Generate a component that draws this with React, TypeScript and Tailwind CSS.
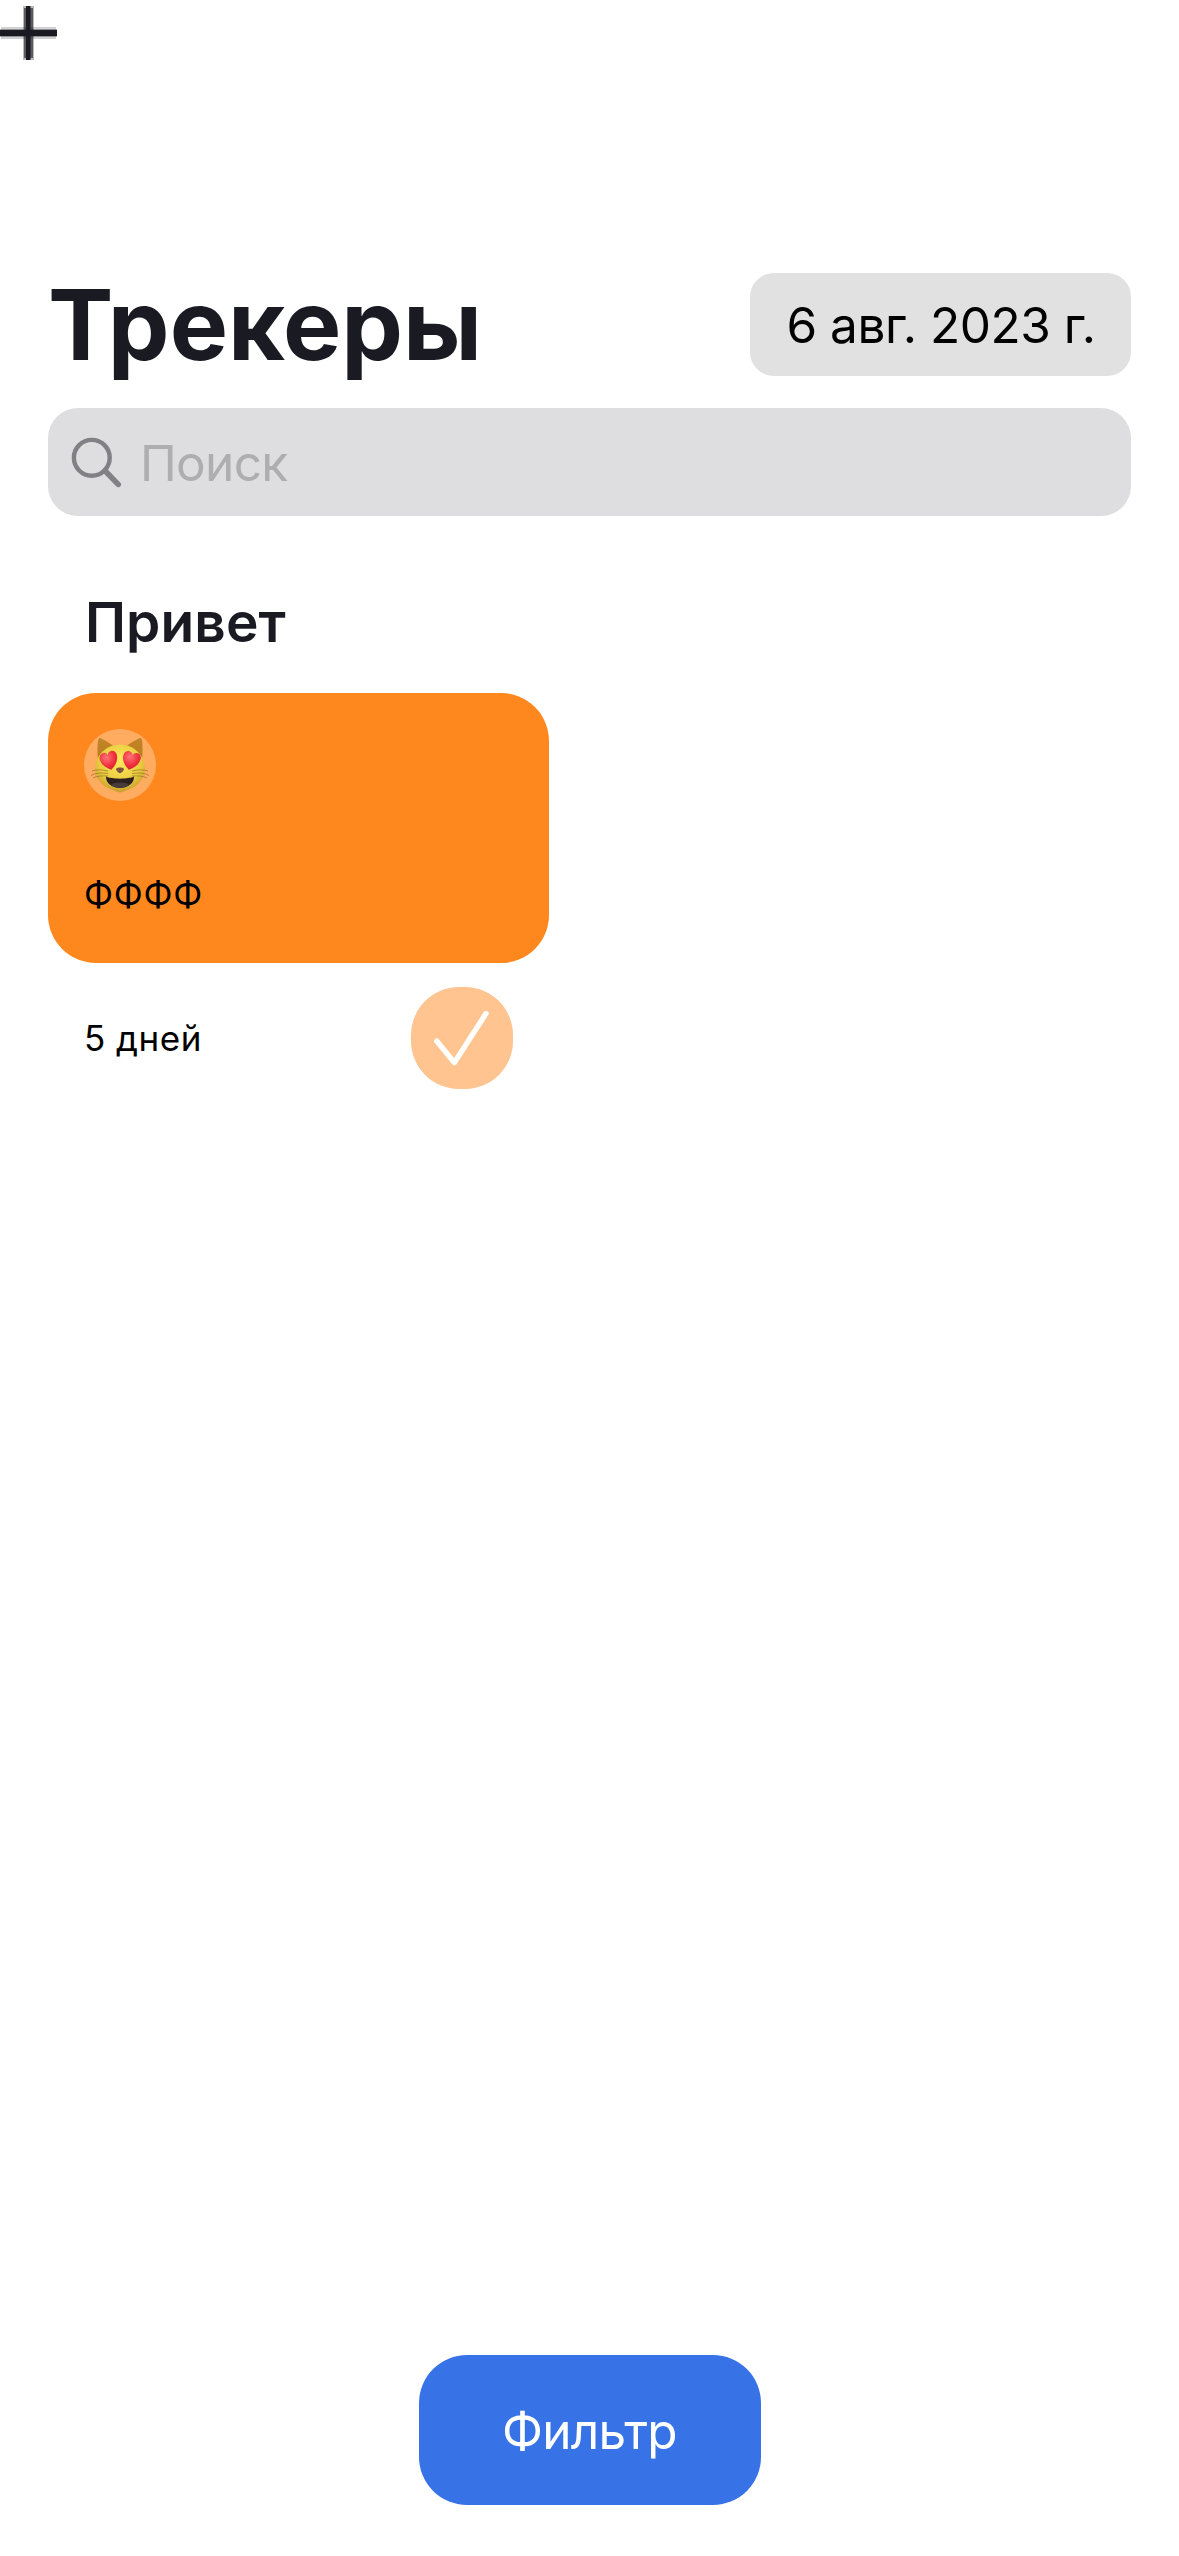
function PlusIcon() {
  return (
    <svg className="block h-[64px] w-[64px]" viewBox="0 0 64 64" aria-label="Добавить">
      <g fill="#1a1b22">
        <rect x="23" y="6" width="11" height="54" opacity="0.3" />
        <rect x="24" y="8" width="9" height="50" opacity="0.6" />
        <rect x="1" y="27" width="55" height="12" opacity="0.2" />
        <rect x="0" y="29" width="57" height="8" opacity="0.35" />
        <rect x="26" y="6" width="4.5" height="54" />
        <rect x="0" y="30" width="57" height="6" />
      </g>
    </svg>
  );
}

function SearchIcon() {
  return (
    <svg className="block h-[54px] w-[54px]" viewBox="0 0 54 54" fill="none" stroke="#808085">
      <circle cx="21.8" cy="22.8" r="17.9" strokeWidth="4.4" />
      <path d="M35 35.8L48.2 49.4" strokeWidth="5.6" strokeLinecap="round" />
    </svg>
  );
}

function HeartEyesCat() {
  return (
    <svg className="block h-[72px] w-[72px]" viewBox="0 0 72 72" role="img" aria-label="😻">
      <defs>
        <radialGradient id="face" cx="0.5" cy="0.35" r="0.7">
          <stop offset="0" stopColor="#fce95c" />
          <stop offset="0.6" stopColor="#ebcb40" />
          <stop offset="1" stopColor="#c0932a" />
        </radialGradient>
        <radialGradient id="heart" cx="0.4" cy="0.3" r="0.75">
          <stop offset="0" stopColor="#ff7478" />
          <stop offset="0.6" stopColor="#f0323e" />
          <stop offset="1" stopColor="#cf1f2c" />
        </radialGradient>
        <linearGradient id="ear" x1="0" y1="0" x2="0" y2="1">
          <stop offset="0" stopColor="#c4862a" />
          <stop offset="1" stopColor="#b87b1c" />
        </linearGradient>
        <path id="heart-shape" d="M0 9C-5 6-8.2 1.8-8.2-2.6C-8.2-6-5.8-8-3.4-7.8C-1.6-7.6-.4-6.5 0-5C.5-6.5 1.8-7.6 3.6-7.8C6.2-8 8.4-6 8.2-2.6C8 2 5 6 0 9Z" />
      </defs>
      <path d="M13.8 29C13.2 20 13.6 13 14.6 9.8C15 8.7 16 8.8 16.8 9.2C21 11.2 26.5 14.6 31 18Z" fill="url(#ear)" />
      <path d="M58.2 29C58.8 20 58.6 13 57.6 9.8C57.2 8.7 56.2 8.8 55.4 9.2C51 11.2 45.5 14.6 41 18Z" fill="url(#ear)" />
      <path d="M36 15.5C50.5 15.5 60.8 27 61 40C61 53 48.5 60.5 36 63.5C23.5 60.5 11 53 11 40C11.2 27 21.5 15.5 36 15.5Z" fill="url(#face)" />
      <g fill="none" stroke="#79591f" strokeWidth="0.8" opacity="0.65">
        <path d="M24 42C18 40.5 12 40.5 8 42M24 44.5C17 43.5 11 44 7 46.5M24 47C18 46.5 13 47 9 49" />
        <path d="M48 42C54 40.5 60 40.5 64 42M48 44.5C55 43.5 61 44 65 46.5M48 47C54 46.5 59 47 63 49" />
      </g>
      <use href="#heart-shape" fill="url(#heart)" transform="translate(25 31.2) rotate(-14) scale(1.08)" />
      <use href="#heart-shape" fill="url(#heart)" transform="translate(47.2 31.2) rotate(14) scale(1.08)" />
      <path d="M32.2 39.6C33.6 38 38.6 38 39.8 39.6C40.4 41.4 37.6 44.2 36 44.2C34.4 44.2 31.6 41.4 32.2 39.6Z" fill="#80543f" />
      <path d="M22 47.6C27 50.4 45 50.4 50 47.6C50.5 54 44 59 36 59C28 59 21.5 54 22 47.6Z" fill="#2c211f" />
      <path d="M27 56C30.5 52.8 41.5 52.8 45 56C42.5 58 39.5 58.9 36 58.9C32.5 58.9 29.5 58 27 56Z" fill="#453c3c" />
    </svg>
  );
}

function CheckIcon() {
  return (
    <svg className="block h-[102px] w-[102px]" viewBox="0 0 102 102" fill="none" stroke="#ffffff" strokeWidth="5.4" strokeLinecap="round" strokeLinejoin="round">
      <path d="M25.7 54L43.4 75.6L75 26.5" />
    </svg>
  );
}

function TrackerCard({ title, days }: { title: string; days: string }) {
  return (
    <article className="w-[501px]">
      <div className="flex h-[270px] flex-col justify-between rounded-[48px] bg-[#ff881e] px-9 pt-9 pb-[45px]">
        <div className="size-[72px] rounded-full bg-white/30">
          <HeartEyesCat />
        </div>
        <p className="text-[35px] leading-[48px] tracking-[0.8px] text-black">{title}</p>
      </div>
      <div className="mt-6 flex h-[102px] items-center justify-between pr-9 pl-9">
        <p className="text-[35px] leading-[48px] tracking-[0.5px] text-black">{days}</p>
        <button className="size-[102px] rounded-[48px] bg-[#ffc48f]">
          <CheckIcon />
        </button>
      </div>
    </article>
  );
}

export default function App() {
  return (
    <main className="flex h-[2556px] w-[1179px] flex-col bg-white font-['Inter',sans-serif]">
      <div className="h-[273px]">
        <PlusIcon />
      </div>

      <header className="flex h-[103px] items-center justify-between px-12">
        <h1 className="text-[98px] leading-[103px] font-bold text-[#1a1b22]">Трекеры</h1>
        <button className="h-[103px] w-[381px] rounded-[24px] bg-[#e1e1e1] pt-px pl-[36.5px] text-left text-[49.5px] leading-[102px] tracking-[-0.5px] whitespace-nowrap text-black">
          6 авг. 2023 г.
        </button>
      </header>

      <div className="mx-12 mt-8 flex h-[108px] items-center rounded-[30px] bg-[#dedee0] pl-[22px]">
        <SearchIcon />
        <span className="pt-[3px] pl-[16px] text-[49.5px] leading-none tracking-[-0.7px] text-[#aeaeb0]">Поиск</span>
      </div>

      <section className="px-12 pt-[72px]">
        <h2 className="mb-[37px] pl-[37px] text-[55px] leading-[68px] font-semibold tracking-[0.1px] text-[#1a1b22]">Привет</h2>
        <TrackerCard title="ФФФФ" days="5 дней" />
      </section>

      <footer className="mt-auto flex justify-center pb-[51px]">
        <button className="h-[150px] w-[342px] rounded-[48px] bg-[#3772e7] pt-0.5 text-[49.5px] tracking-[-0.8px] text-white">
          Фильтр
        </button>
      </footer>
    </main>
  );
}
